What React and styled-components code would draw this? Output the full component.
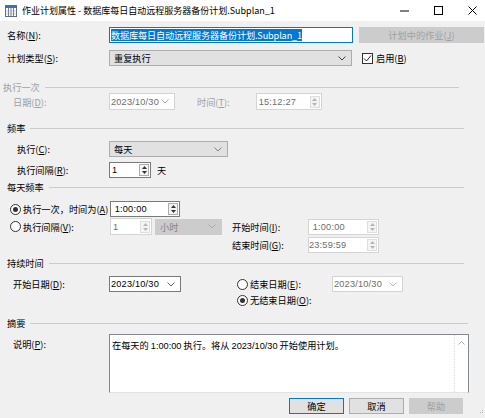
import React from 'react';
import styled, { createGlobalStyle } from 'styled-components';

const GlobalStyle = createGlobalStyle`
  html, body {
    margin: 0;
    padding: 0;
    background: #f0f0f0;
  }
  body {
    font-family: "Noto Sans CJK SC", "Liberation Sans", sans-serif;
    font-size: 9.2px;
    color: #000;
  }
  * {
    box-sizing: border-box;
  }
`;

const Window = styled.div`
  width: 485px;
  height: 418px;
  background: #f0f0f0;
  display: flex;
  flex-direction: column;
  overflow: hidden;
  position: relative;
`;

const TitleBar = styled.div`
  height: 21px;
  flex: none;
  background: #fff;
  display: flex;
  align-items: center;
  padding-left: 5px;
  padding-right: 8px;
`;

const TitleText = styled.span`
  margin-left: 5px;
  font-size: 9px;
  white-space: nowrap;
`;

const WinButtons = styled.div`
  margin-left: auto;
  display: flex;
  align-items: center;
  gap: 25px;
`;

const Form = styled.div`
  display: flex;
  flex-direction: column;
`;

const Row = styled.div`
  display: flex;
  align-items: ${p => p.align || 'center'};
  height: ${p => p.h || 16}px;
  margin-top: ${p => p.mt || 0}px;
  padding-left: ${p => p.indent || 0}px;
  flex: none;
`;

const Label = styled.span`
  width: ${p => p.w}px;
  flex: none;
  white-space: nowrap;
  color: ${p => (p.disabled ? '#a0a0a0' : '#000')};
  padding-top: ${p => p.pt || 0}px;
`;

const InlineLabel = styled.span`
  white-space: nowrap;
  color: ${p => (p.disabled ? '#a0a0a0' : '#000')};
  margin-left: ${p => p.ml || 0}px;
`;

const GroupHeader = styled.div`
  display: flex;
  align-items: center;
  height: 12px;
  margin-top: ${p => p.mt || 0}px;
  padding-left: ${p => p.indent || 7}px;
  width: ${p => p.end}px;
  flex: none;
`;

const GroupTitle = styled.span`
  white-space: nowrap;
  color: ${p => (p.disabled ? '#a0a0a0' : '#000')};
`;

const GroupLine = styled.div`
  flex: 1;
  height: 1px;
  margin-left: 5px;
  background: #cbcbcb;
`;

const NameInput = styled.div`
  width: 244px;
  height: 16px;
  border: 1px solid #0078d7;
  background: #fff;
  display: flex;
  align-items: center;
  padding-left: 1px;
  overflow: hidden;
`;

const Selected = styled.span`
  background: #0078d7;
  color: #fff;
  font-size: 9.1px;
  line-height: 12px;
  white-space: nowrap;
  letter-spacing: -0.1px;
`;

const PushButton = styled.div`
  width: ${p => p.w}px;
  height: 16px;
  margin-left: ${p => p.ml || 0}px;
  flex: none;
  display: flex;
  align-items: center;
  justify-content: center;
  background: ${p => (p.disabled ? '#cccccc' : '#e1e1e1')};
  border: 1px solid ${p => (p.primary ? '#0078d7' : p.disabled ? '#cccccc' : '#adadad')};
  color: ${p => (p.disabled ? '#a0a0a0' : '#000')};
  white-space: nowrap;
`;

const Combo = styled.div`
  width: ${p => p.w}px;
  height: 16px;
  margin-left: ${p => p.ml || 0}px;
  flex: none;
  display: flex;
  align-items: center;
  padding-left: 4px;
  padding-right: 5px;
  background: ${p => (p.disabled ? '#cccccc' : '#e1e1e1')};
  border: 1px solid ${p => (p.disabled ? '#cccccc' : '#adadad')};
  color: ${p => (p.disabled ? '#838383' : '#000')};
`;

const ComboText = styled.span`
  flex: 1;
  white-space: nowrap;
`;

const FieldBox = styled.div`
  width: ${p => p.w}px;
  height: ${p => p.h || 16}px;
  margin-left: ${p => p.ml || 0}px;
  flex: none;
  display: flex;
  align-items: center;
  background: #fff;
  border: 1px solid ${p => (p.disabled ? '#d4d4d4' : '#7a7a7a')};
  color: ${p => (p.disabled ? '#6d6d6d' : '#000')};
  padding-left: ${p => p.pl ?? 1}px;
  padding-right: ${p => p.pr ?? 1}px;
`;

const NumText = styled.span`
  flex: 1;
  font-family: "Liberation Sans", sans-serif;
  font-size: 9.2px;
  white-space: pre;
  letter-spacing: 0.2px;
`;

const SpinButtons = styled.div`
  width: 10px;
  height: 12px;
  flex: none;
  display: flex;
  flex-direction: column;
  border: 1px solid ${p => (p.disabled ? '#dedede' : '#adadad')};
  background: #f4f4f4;
`;

const SpinHalf = styled.div`
  flex: 1;
  display: flex;
  align-items: center;
  justify-content: center;
`;

const Unit = styled.span`
  margin-left: 6px;
`;

const RadioWrap = styled.div`
  display: flex;
  align-items: center;
  white-space: nowrap;
  width: ${p => (p.w ? `${p.w}px` : 'auto')};
  flex: none;
`;

const RadioCircle = styled.span`
  width: 11px;
  height: 11px;
  border-radius: 50%;
  border: 1px solid #333;
  background: #fff;
  display: inline-flex;
  align-items: center;
  justify-content: center;
  margin-right: 2px;
  flex: none;
`;

const RadioDot = styled.span`
  width: 5px;
  height: 5px;
  border-radius: 50%;
  background: #333;
`;

const CheckBox = styled.span`
  width: 11px;
  height: 11px;
  border: 1px solid #333;
  background: #fff;
  margin-left: 10px;
  margin-right: 3px;
  display: inline-flex;
  align-items: center;
  justify-content: center;
  flex: none;
`;

const TwoCol = styled.div`
  display: grid;
  grid-template-columns: ${p => p.left}px 1fr;
  margin-top: ${p => p.mt || 0}px;
  flex: none;
`;

const Column = styled.div`
  display: flex;
  flex-direction: column;
  padding-top: ${p => p.pt || 0}px;
`;

const Memo = styled.div`
  width: 360px;
  height: 59px;
  flex: none;
  display: flex;
  background: #fff;
  border: 1px solid #828790;
  border-bottom-color: #e3e3e3;
`;

const MemoText = styled.div`
  flex: 1;
  padding: 3px 2px;
  white-space: nowrap;
`;

const MemoNum = styled.span`
  font-family: "Liberation Sans", sans-serif;
  font-size: 9.2px;
`;

const ScrollTrack = styled.div`
  width: 14px;
  flex: none;
  border-left: 1px dotted #dcdcdc;
  display: flex;
  justify-content: center;
  padding-top: 6px;
`;

const ButtonBar = styled.div`
  display: flex;
  justify-content: flex-end;
  gap: 5px;
  padding-right: 22px;
  margin-top: 5px;
  flex: none;
`;

const Grip = styled.div`
  position: absolute;
  right: 1px;
  bottom: 1px;
`;

const u = ch => <u>{ch}</u>;

const Chevron = ({ color = '#555' }) => (
  <svg width="8" height="5" viewBox="0 0 8 5">
    <path d="M0.5 0.5 L4 4 L7.5 0.5" fill="none" stroke={color} strokeWidth="0.9" />
  </svg>
);

const Spinner = ({ disabled }) => {
  const c = disabled ? '#b5b5b5' : '#333';
  return (
    <SpinButtons disabled={disabled}>
      <SpinHalf>
        <svg width="5" height="3" viewBox="0 0 5 3"><path d="M0 3 L2.5 0 L5 3 Z" fill={c} /></svg>
      </SpinHalf>
      <SpinHalf>
        <svg width="5" height="3" viewBox="0 0 5 3"><path d="M0 0 L2.5 3 L5 0 Z" fill={c} /></svg>
      </SpinHalf>
    </SpinButtons>
  );
};

const Radio = ({ checked, children, w }) => (
  <RadioWrap w={w}>
    <RadioCircle>{checked && <RadioDot />}</RadioCircle>
    {children}
  </RadioWrap>
);

const AppIcon = () => (
  <svg width="12" height="12" viewBox="0 0 12 12">
    <rect x="0.5" y="0.5" width="11" height="11" fill="#fff" stroke="#5b6d86" />
    <rect x="0.5" y="0.5" width="11" height="2.5" fill="#3c6fb4" />
    <path d="M3.5 3 V11.5 M6 3 V11.5 M8.5 3 V11.5" stroke="#5b6d86" strokeWidth="0.9" />
    <path d="M0.5 6 H11.5 M0.5 8.8 H11.5" stroke="#9aa8bb" strokeWidth="0.6" />
  </svg>
);

const App = () => (
  <>
    <GlobalStyle />
    <Window>
      <TitleBar>
        <AppIcon />
        <TitleText>作业计划属性 - 数据库每日自动远程服务器备份计划.Subplan_1</TitleText>
        <WinButtons>
          <svg width="9" height="9" viewBox="0 0 9 9"><path d="M0 5 H9" stroke="#000" strokeWidth="1" /></svg>
          <svg width="9" height="9" viewBox="0 0 9 9"><rect x="0.5" y="0.5" width="8" height="8" fill="none" stroke="#000" /></svg>
          <svg width="9" height="9" viewBox="0 0 9 9"><path d="M0.5 0.5 L8.5 8.5 M8.5 0.5 L0.5 8.5" stroke="#000" strokeWidth="1" /></svg>
        </WinButtons>
      </TitleBar>

      <Form>
        <Row mt={6} indent={7}>
          <Label w={102}>名称({u('N')}):</Label>
          <NameInput>
            <Selected>数据库每日自动远程服务器备份计划.Subplan_1</Selected>
          </NameInput>
          <PushButton w={125} ml={6} disabled>计划中的作业({u('J')})</PushButton>
        </Row>

        <Row mt={7} indent={7}>
          <Label w={102}>计划类型({u('S')}):</Label>
          <Combo w={243}>
            <ComboText>重复执行</ComboText>
            <Chevron color="#333" />
          </Combo>
          <CheckBox>
            <svg width="9" height="9" viewBox="0 0 9 9"><path d="M1 4.5 L3.5 7 L8 1.5" fill="none" stroke="#222" strokeWidth="1" /></svg>
          </CheckBox>
          <InlineLabel>启用({u('B')})</InlineLabel>
        </Row>

        <GroupHeader mt={15} indent={3} end={459}>
          <GroupTitle disabled>执行一次</GroupTitle>
          <GroupLine />
        </GroupHeader>

        <Row mt={0} h={17} indent={13}>
          <Label w={96} disabled>日期({u('D')}):</Label>
          <FieldBox w={66} h={17} disabled pr={5}>
            <NumText>2023/10/30</NumText>
            <Chevron color="#a0a0a0" />
          </FieldBox>
          <InlineLabel disabled ml={22}>时间({u('T')}):</InlineLabel>
          <FieldBox w={66} h={17} ml={26} disabled pl={2}>
            <NumText>15:12:27</NumText>
            <Spinner disabled />
          </FieldBox>
        </Row>

        <GroupHeader mt={12} end={464}>
          <GroupTitle>频率</GroupTitle>
          <GroupLine />
        </GroupHeader>

        <Row mt={7} indent={17}>
          <Label w={92}>执行({u('C')}):</Label>
          <Combo w={119}>
            <ComboText>每天</ComboText>
            <Chevron color="#777" />
          </Combo>
        </Row>

        <Row mt={5} indent={17}>
          <Label w={92}>执行间隔({u('R')}):</Label>
          <FieldBox w={42} pl={2}>
            <NumText>1</NumText>
            <Spinner />
          </FieldBox>
          <Unit>天</Unit>
        </Row>

        <GroupHeader mt={3} end={464}>
          <GroupTitle>每天频率</GroupTitle>
          <GroupLine />
        </GroupHeader>

        <TwoCol left={232} mt={8}>
          <Column>
            <Row indent={10}>
              <Radio checked w={100}>执行一次，时间为({u('A')})</Radio>
              <FieldBox w={70} pl={1}>
                <NumText>{' 1:00:00'}</NumText>
                <Spinner />
              </FieldBox>
            </Row>
            <Row mt={1} h={17} indent={10}>
              <Radio w={100}>执行间隔({u('V')}):</Radio>
              <FieldBox w={42} h={17} disabled pl={2}>
                <NumText>1</NumText>
                <Spinner disabled />
              </FieldBox>
              <Combo w={67} ml={3} disabled>
                <ComboText>小时</ComboText>
                <Chevron color="#a8a8a8" />
              </Combo>
            </Row>
          </Column>
          <Column pt={18}>
            <Row>
              <Label w={76}>开始时间({u('I')}):</Label>
              <FieldBox w={71} disabled pl={1}>
                <NumText>{' 1:00:00'}</NumText>
                <Spinner disabled />
              </FieldBox>
            </Row>
            <Row mt={2}>
              <Label w={76}>结束时间({u('G')}):</Label>
              <FieldBox w={71} disabled pl={0}>
                <NumText>23:59:59</NumText>
                <Spinner disabled />
              </FieldBox>
            </Row>
          </Column>
        </TwoCol>

        <GroupHeader mt={4} end={464}>
          <GroupTitle>持续时间</GroupTitle>
          <GroupLine />
        </GroupHeader>

        <TwoCol left={237} mt={7}>
          <Column>
            <Row indent={13}>
              <Label w={96}>开始日期({u('D')}):</Label>
              <FieldBox w={72} pr={5}>
                <NumText>2023/10/30</NumText>
                <Chevron color="#555" />
              </FieldBox>
            </Row>
          </Column>
          <Column>
            <Row>
              <Radio w={95}>结束日期({u('E')}):</Radio>
              <FieldBox w={71} disabled pr={5}>
                <NumText>2023/10/30</NumText>
                <Chevron color="#b0b0b0" />
              </FieldBox>
            </Row>
            <Row>
              <Radio checked>无结束日期({u('O')}):</Radio>
            </Row>
          </Column>
        </TwoCol>

        <GroupHeader mt={9} end={468}>
          <GroupTitle>摘要</GroupTitle>
          <GroupLine />
        </GroupHeader>

        <Row mt={5} h={59} indent={13} align="flex-start">
          <Label w={96} pt={3}>说明({u('P')}):</Label>
          <Memo>
            <MemoText>
              在每天的 <MemoNum>1:00:00</MemoNum> 执行。将从 <MemoNum>2023/10/30</MemoNum> 开始使用计划。
            </MemoText>
            <ScrollTrack>
              <svg width="7" height="4" viewBox="0 0 7 4"><path d="M0.5 3.5 L3.5 0.5 L6.5 3.5" fill="none" stroke="#a6a6a6" strokeWidth="0.9" /></svg>
            </ScrollTrack>
          </Memo>
        </Row>

        <ButtonBar>
          <PushButton w={55} primary>确定</PushButton>
          <PushButton w={55}>取消</PushButton>
          <PushButton w={54} disabled>帮助</PushButton>
        </ButtonBar>
      </Form>

      <Grip>
        <svg width="4" height="4" viewBox="0 0 4 4">
          <rect x="2" y="0" width="1" height="1" fill="#b5b5b5" />
          <rect x="0" y="2" width="1" height="1" fill="#b5b5b5" />
          <rect x="2" y="2" width="1" height="1" fill="#b5b5b5" />
        </svg>
      </Grip>
    </Window>
  </>
);

export default App;
